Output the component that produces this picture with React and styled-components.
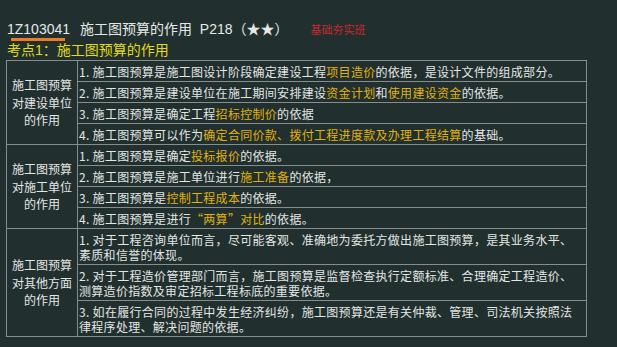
import React from "react";
import styled, { createGlobalStyle } from "styled-components";

const GlobalStyles = createGlobalStyle`
  html, body {
    margin: 0;
    padding: 0;
    background: #21302f;
  }
  body {
    font-family: "Liberation Sans", "Noto Sans CJK SC", sans-serif;
    width: 617px;
    height: 347px;
    overflow: hidden;
  }
`;

const groups = [
  {
    title: ["施工图预算", "对建设单位", "的作用"],
    rows: [
      ["1. 施工图预算是施工图设计阶段确定建设工程", { hl: "项目造价" }, "的依据，是设计文件的组成部分。"],
      ["2. 施工图预算是建设单位在施工期间安排建设", { hl: "资金计划" }, "和", { hl: "使用建设资金" }, "的依据。"],
      ["3. 施工图预算是确定工程", { hl: "招标控制价" }, "的依据"],
      ["4. 施工图预算可以作为", { hl: "确定合同价款、拨付工程进度款及办理工程结算" }, "的基础。"]
    ]
  },
  {
    title: ["施工图预算", "对施工单位", "的作用"],
    rows: [
      ["1. 施工图预算是确定", { hl: "投标报价" }, "的依据。"],
      ["2. 施工图预算是施工单位进行", { hl: "施工准备" }, "的依据，"],
      ["3. 施工图预算是", { hl: "控制工程成本" }, "的依据。"],
      ["4. 施工图预算是进行", { hl: "“两算”对比" }, "的依据。"]
    ]
  },
  {
    title: ["施工图预算", "对其他方面", "的作用"],
    rows: [
      ["1. 对于工程咨询单位而言，尽可能客观、准确地为委托方做出施工图预算，是其业务水平、素质和信誉的体现。"],
      ["2. 对于工程造价管理部门而言，施工图预算是监督检查执行定额标准、合理确定工程造价、测算造价指数及审定招标工程标底的重要依据。"],
      ["3. 如在履行合同的过程中发生经济纠纷，施工图预算还是有关仲裁、管理、司法机关按照法律程序处理、解决问题的依据。"]
    ]
  }
];

export default function App() {
  return (
    <Page>
      <GlobalStyles />
      <Header>
        <Code>1Z103041</Code>
        <Title>施工图预算的作用&nbsp;&nbsp;P218（★★）</Title>
        <Tag>基础夯实班</Tag>
      </Header>
      <Point>考点1：施工图预算的作用</Point>
      <Table>
        {groups.map((g, gi) => (
          <Group key={gi} $first={gi === 0}>
            <Side>
              {g.title.map(t => (
                <div key={t}>{t}</div>
              ))}
            </Side>
            <Rows>
              {g.rows.map((r, ri) => (
                <Row key={ri} $first={ri === 0}>
                  {r.map((part, pi) =>
                    typeof part === "string" ? part : <Hl key={pi}>{part.hl}</Hl>
                  )}
                </Row>
              ))}
            </Rows>
          </Group>
        ))}
      </Table>
    </Page>
  );
}

const Page = styled.div`
  padding: 18px 0 0 7px;
`;

const Header = styled.div`
  display: flex;
  align-items: baseline;
  height: 20px;
  color: #e6e8e6;
  font-size: 14px;
`;

const Code = styled.span`
  position: relative;
  &::after {
    content: "";
    position: absolute;
    left: 4px;
    right: 5px;
    bottom: -4px;
    height: 3px;
    background: #f07c22;
  }
`;

const Title = styled.span`
  margin-left: 10px;
`;

const Tag = styled.span`
  margin-left: 22px;
  font-size: 11px;
  color: #c8282c;
`;

const Point = styled.div`
  margin-top: 2px;
  font-size: 14px;
  line-height: 20px;
  color: #e2dc16;
`;

const Table = styled.div`
  width: 579px;
  margin: 0 0 0 -1px;
  border: 1px solid #868d8c;
  font-family: "Noto Sans CJK SC", sans-serif;
  color: #e4e6e4;
`;

const Group = styled.div`
  display: grid;
  grid-template-columns: 71px 1fr;
  border-top: ${p => (p.$first ? "none" : "1px solid #868d8c")};
`;

const Side = styled.div`
  display: flex;
  flex-direction: column;
  justify-content: center;
  align-items: center;
  border-right: 1px solid #868d8c;
  font-size: 12px;
  line-height: 17.5px;
`;

const Rows = styled.div`
  display: flex;
  flex-direction: column;
`;

const Row = styled.div`
  padding: 3px 6px 2px 1px;
  font-size: 12px;
  letter-spacing: 0.3px;
  line-height: 15px;
  border-top: ${p => (p.$first ? "none" : "1px solid #868d8c")};
`;

const Hl = styled.span`
  color: #e0b20c;
`;
